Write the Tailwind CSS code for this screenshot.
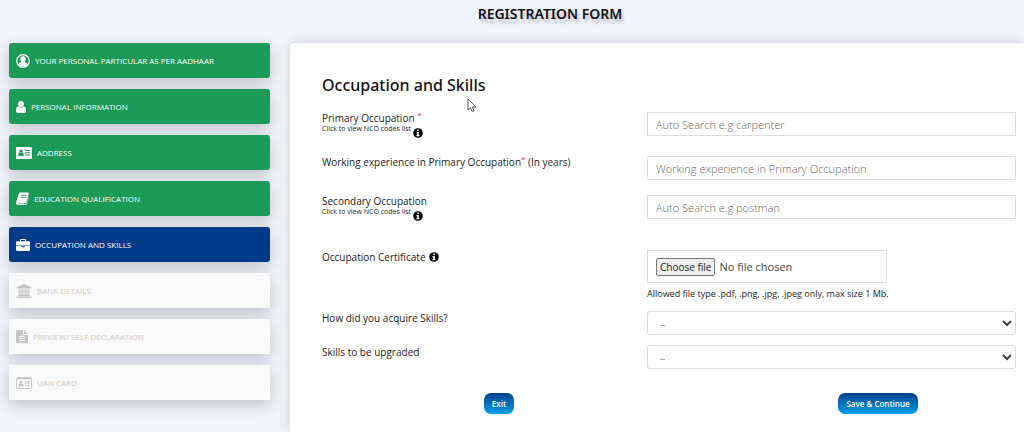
<!DOCTYPE html>
<html lang="en">
<head>
<meta charset="UTF-8">
<meta name="viewport" content="width=device-width, initial-scale=1.0">
<title>Registration Form</title>
<script src="https://cdn.jsdelivr.net/npm/@tailwindcss/browser@4"></script>
</head>
<body class="bg-[#f0f3fb] font-['Open_Sans',sans-serif] text-[#222]">

<div class="relative flex min-h-screen flex-col">

    <h1 class="pt-1 pl-19 text-center font-['Noto_Sans',sans-serif] text-sm leading-5 font-semibold text-[#111] text-shadow-[2px_4px_3px_rgb(0_0_0/0.2)]">REGISTRATION FORM</h1>

    <div class="mt-[19px] flex flex-1 gap-5 pl-[9px]">

        <!-- steps -->
        <nav class="flex w-[261px] shrink-0 flex-col gap-[11px] text-[8px] text-white">
            <a href="#" class="flex h-[35px] items-center gap-[5px] rounded-[3px] bg-[#1c9a57] px-[7px] shadow-[0_5px_15px_rgb(0_0_0/0.2)]">
                <svg class="h-[14px] w-[14px]" viewBox="0 0 14 14" fill="currentColor"><circle cx="7" cy="7" r="6.3" fill="none" stroke="currentColor" stroke-width="1.2"/><path d="M7 2.200c-1.700 0-2.700 1.200-2.700 2.800 0 1.200.5 2.200 1.200 2.700C3.900 8.200 2.800 9 2.600 10.600 3.600 12 5.200 12.800 7 12.800s3.400-.8 4.400-2.200C11.200 9 10.100 8.200 8.500 7.700 9.200 7.200 9.700 6.200 9.700 5 9.700 3.400 8.700 2.200 7 2.200z"/></svg>
                YOUR PERSONAL PARTICULAR AS PER AADHAAR
            </a>
            <a href="#" class="flex h-[35px] items-center gap-[5px] rounded-[3px] bg-[#1c9a57] px-[7px] shadow-[0_5px_15px_rgb(0_0_0/0.2)]">
                <svg class="h-3 w-[10px]" viewBox="0 0 10 12" fill="currentColor"><circle cx="5" cy="3" r="2.900"/><path d="M2.400 5.200C.8 5.400 0 7 0 9.800 0 11.200.8 12 2 12h6c1.200 0 2-.8 2-2.200 0-2.800-.8-4.400-2.400-4.600C6.900 6 6 6.400 5 6.400S3.100 6 2.400 5.200z"/></svg>
                PERSONAL INFORMATION
            </a>
            <a href="#" class="flex h-[35px] items-center gap-[5px] rounded-[3px] bg-[#1c9a57] px-[7px] shadow-[0_5px_15px_rgb(0_0_0/0.2)]">
                <svg class="h-3 w-4" viewBox="0 0 16 12"><rect width="16" height="12" rx="1.300" fill="currentColor"/><g fill="#1c9a57"><circle cx="5" cy="4.200" r="1.600"/><path d="M2.300 9V7.600c0-1.200.6-1.900 1.500-2 .7.500 1.700.5 2.400 0 .9.100 1.500.8 1.500 2V9z"/><path d="M9 3h5v1H9zM9 5.200h5v1H9zM9 7.400h5v1H9z"/></g></svg>
                ADDRESS
            </a>
            <a href="#" class="flex h-[35px] items-center gap-[5px] rounded-[3px] bg-[#1c9a57] px-[7px] shadow-[0_5px_15px_rgb(0_0_0/0.2)]">
                <svg class="h-[13px] w-[13px]" viewBox="0 0 13 13"><path d="M4.500.5h7.300c.8 0 1.200.5 1 1.200l-2.600 8.800c-.2.600-.7 1-1.400 1H2c-.6 0-.8.600.1.600h7.300c.5 0 .8-.2 1-.7L12.900 4c.2 0 .2.300.1.700l-2.200 7.300c-.2.600-.7 1-1.400 1H2C.6 13-.3 11.600.1 10.400L2.800 1.800C3.100 1 3.700.5 4.500.5z" fill="currentColor"/><path d="M5.300 3.300h5M4.700 5.300h5" stroke="#1c9a57" stroke-width=".9"/></svg>
                EDUCATION QUALIFICATION
            </a>
            <a href="#" aria-current="step" class="flex h-[35px] items-center gap-[5px] rounded-[3px] bg-[#003a88] px-[7px] shadow-[0_5px_15px_rgb(0_0_0/0.2)]">
                <svg class="h-3 w-[14px]" viewBox="0 0 14 12" fill="currentColor"><path d="M4 2.200V1c0-.6.4-1 1-1h4c.6 0 1 .4 1 1v1.200h2.800c.7 0 1.200.5 1.200 1.200v3H0v-3c0-.7.5-1.200 1.200-1.200zM5 1v1.200h4V1z"/><path d="M0 7h5.400v1.300h3.200V7H14v3.800c0 .7-.5 1.200-1.200 1.200H1.200C.5 12 0 11.500 0 10.800z"/><path d="M6.300 6.800h1.400v.8H6.300z"/></svg>
                OCCUPATION AND SKILLS
            </a>
            <a href="#" class="flex h-[35px] items-center gap-[5px] bg-[#fafafa] px-[7px] text-[#c8c8c8] shadow-[0_5px_15px_rgb(0_0_0/0.2)]">
                <svg class="h-[14px] w-4" viewBox="0 0 16 14" fill="currentColor"><path d="M8 0l7.500 3v1H14.500c0 .4-.2.500-.5.500H2c-.3 0-.5-.1-.5-.5H.5V3zM2.500 5.200h2V11h1V5.200h2V11h1V5.200h2V11h1V5.200h2V11c.4 0 .8.200.8.600v.4H1.700v-.4c0-.4.400-.6.800-.6zM1 12.500h14c.3 0 .5.200.5.500v1H.5v-1c0-.3.200-.5.500-.5z"/></svg>
                BANK DETAILS
            </a>
            <a href="#" class="flex h-[35px] items-center gap-[5px] bg-[#fafafa] px-[7px] text-[#c8c8c8] shadow-[0_5px_15px_rgb(0_0_0/0.2)]">
                <svg class="h-[13px] w-3" viewBox="0 0 12 13" fill="currentColor"><path d="M.8 0H7v4.200c0 .4.300.8.800.8H12v7.200c0 .4-.3.800-.8.800H.8c-.5 0-.8-.4-.8-.8V.8C0 .4.300 0 .8 0zM8 .1c.2.100.4.200.6.400l2.900 2.900c.2.200.3.400.4.600H8z"/><path d="M3 6.500h6M3 8.500h6M3 10.500h6" stroke="#fafafa" stroke-width=".8"/></svg>
                PREVIEW/ SELF DECLARATION
            </a>
            <a href="#" class="flex h-[35px] items-center gap-[5px] bg-[#fafafa] px-[7px] text-[#c8c8c8] shadow-[0_5px_15px_rgb(0_0_0/0.2)]">
                <svg class="h-3 w-4" viewBox="0 0 16 12" fill="currentColor"><rect x=".5" y=".5" width="15" height="11" rx=".8" fill="none" stroke="currentColor"/><path d="M1 1h14v1.200H1z"/><circle cx="5" cy="5" r="1.500"/><path d="M2.500 9.500V8.200c0-1.100.6-1.700 1.400-1.800.7.400 1.500.4 2.200 0 .8.100 1.400.7 1.400 1.800v1.300zM9 4.200h5v1H9zM9 6.200h5v1H9zM9 8.200h5v1H9z"/></svg>
                UAN CARD
            </a>
        </nav>

        <!-- form -->
        <main class="flex-1 rounded-tl-[5px] bg-white pt-[30px] pr-2 pl-8 shadow-[0_0_12px_rgb(0_0_0/0.15)]">
            <h2 class="font-['Noto_Sans',sans-serif] text-base leading-6 font-medium text-[#111]">Occupation and Skills</h2>

            <form class="mt-[15px] text-[10px] leading-3 font-medium">
                <div class="mb-[18px] grid grid-cols-[325fr_369fr] items-start">
                    <div>
                        <label for="primary" class="block leading-3">Primary Occupation <span class="relative -top-1 text-[8px] leading-none text-red-500">*</span></label>
                        <div class="flex h-[14px] gap-[2px] text-[7px] leading-[10px]">
                            <a href="#">Click to view NCO codes list</a>
                            <svg class="mt-1 h-[10px] w-[10px]" viewBox="0 0 10 10"><circle cx="5" cy="5" r="4.800" fill="#000"/><path d="M4.200 1.500h1.600v1.600H4.200zM3.500 4h2.300v3h.8v1.200H3.400V7h.8V5.200h-.7z" fill="#fff"/></svg>
                        </div>
                    </div>
                    <input id="primary" type="text" placeholder="Auto Search e.g carpenter" class="h-6 w-full border border-[#ddd] px-2 text-[11px] font-light placeholder:text-[#666]">
                </div>

                <div class="mb-[15px] grid grid-cols-[325fr_369fr] items-start">
                    <label for="experience" class="leading-3">Working experience in Primary Occupation<span class="relative -top-1 text-[8px] leading-none text-red-500">*</span> (In years)</label>
                    <input id="experience" type="text" placeholder="Working experience in Primary Occupation" class="h-6 w-full border border-[#ddd] px-2 text-[11px] font-light placeholder:text-[#666]">
                </div>

                <div class="mb-[29px] grid grid-cols-[325fr_369fr] items-start">
                    <div>
                        <label for="secondary" class="block leading-3">Secondary Occupation</label>
                        <div class="flex h-[14px] gap-[2px] text-[7px] leading-[10px]">
                            <a href="#">Click to view NCO codes list</a>
                            <svg class="mt-1 h-[10px] w-[10px]" viewBox="0 0 10 10"><circle cx="5" cy="5" r="4.800" fill="#000"/><path d="M4.200 1.500h1.600v1.600H4.200zM3.500 4h2.300v3h.8v1.200H3.400V7h.8V5.200h-.7z" fill="#fff"/></svg>
                        </div>
                    </div>
                    <input id="secondary" type="text" placeholder="Auto Search e.g postman" class="h-6 w-full border border-[#ddd] px-2 text-[11px] font-light placeholder:text-[#666]">
                </div>

                <div class="mb-[10px] grid grid-cols-[325fr_369fr] items-start">
                    <label for="certificate" class="flex items-center gap-[3px] leading-[14px]">Occupation Certificate
                        <svg class="h-[10px] w-[10px]" viewBox="0 0 10 10"><circle cx="5" cy="5" r="4.800" fill="#000"/><path d="M4.200 1.500h1.600v1.600H4.200zM3.500 4h2.300v3h.8v1.200H3.400V7h.8V5.200h-.7z" fill="#fff"/></svg>
                    </label>
                    <div>
                        <label class="relative flex h-[33px] w-[240px] items-center gap-1 border border-[#ddd] px-2 font-normal">
                            <input id="certificate" type="file" class="sr-only">
                            <span class="rounded-[2px] border border-[#777] bg-[#efefef] px-[3px] py-[2px]">Choose file</span>
                            <span class="text-[11px] text-[#444]">No file chosen</span>
                        </label>
                        <p class="mt-1 text-[9px] font-medium leading-[14px]">Allowed file type .pdf, .png, .jpg, .jpeg only, max size 1 Mb.</p>
                    </div>
                </div>

                <div class="mb-[10px] grid grid-cols-[325fr_369fr] items-start">
                    <label for="acquire" class="leading-[14px]">How did you acquire Skills?</label>
                    <select id="acquire" class="h-6 w-full rounded-[3px] border border-[#ddd] bg-white px-2 text-[8px] font-normal text-[#444]">
                        <option>--</option>
                    </select>
                </div>

                <div class="mb-6 grid grid-cols-[325fr_369fr] items-start">
                    <label for="upgrade" class="leading-[14px]">Skills to be upgraded</label>
                    <select id="upgrade" class="h-6 w-full rounded-[3px] border border-[#ddd] bg-white px-2 text-[8px] font-normal text-[#444]">
                        <option>--</option>
                    </select>
                </div>

                <div class="grid grid-cols-[354fr_340fr] text-[8px] text-white">
                    <div class="text-center">
                        <button type="button" class="h-[21px] rounded-[7px] bg-linear-to-b from-[#00408c] to-[#009fe8] px-2 font-semibold">Exit</button>
                    </div>
                    <div class="pl-16 text-center">
                        <button type="submit" class="h-[21px] rounded-[7px] bg-linear-to-b from-[#00408c] to-[#009fe8] px-2 font-semibold">Save &amp; Continue</button>
                    </div>
                </div>
            </form>
        </main>
    </div>

    <!-- pointer -->
    <svg class="pointer-events-none absolute top-[98px] left-[467px] h-[15px] w-[10px]" viewBox="0 0 10 15"><path d="M1 1v11l2.500-2.300 1.800 3.900 1.700-.8-1.700-3.700H9z" fill="#fff" stroke="#444" stroke-width=".9"/></svg>
</div>

</body>
</html>
